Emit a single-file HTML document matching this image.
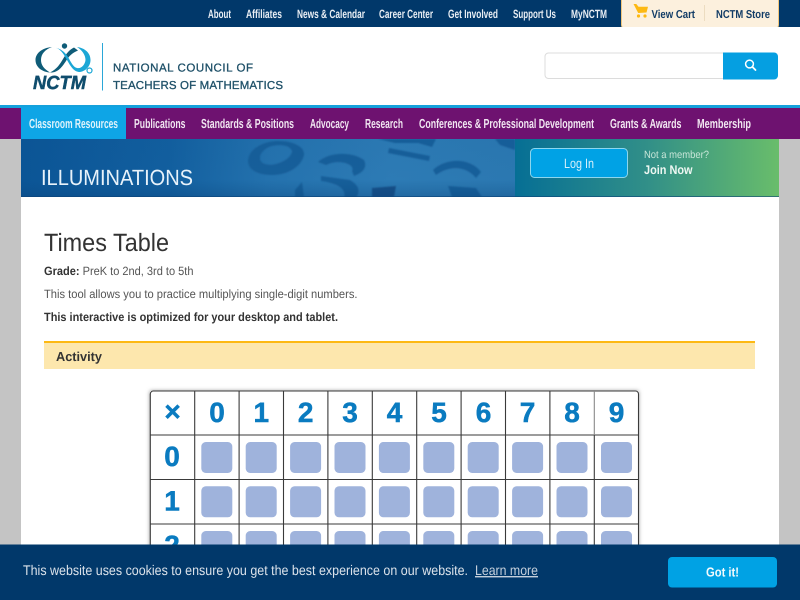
<!DOCTYPE html>
<html>
<head>
<meta charset="utf-8">
<title>Times Table</title>
<style>
html,body{margin:0;padding:0;width:800px;height:600px;overflow:hidden;background:#c4c4c4}
svg{display:block}
text{font-family:"Liberation Sans",Arial,sans-serif;text-rendering:geometricPrecision}
.t{font-weight:700;font-size:12px;fill:#e9eef4}
.n{font-weight:700;font-size:13px;fill:#f1e6f1}
.d{font-weight:700;font-size:28px;fill:#0a7bc0;stroke:#0a7bc0;stroke-width:.5px;text-anchor:middle}
</style>
</head>
<body>
<svg width="800" height="600" viewBox="0 0 800 600" xmlns="http://www.w3.org/2000/svg">
<defs>
<linearGradient id="bl" x1="0" x2="1" y1="0" y2="0">
<stop offset="0" stop-color="#0b5596"/><stop offset="0.3" stop-color="#125f9f"/><stop offset="0.5" stop-color="#2472ae"/><stop offset="0.75" stop-color="#2d7bb5"/><stop offset="1" stop-color="#2b78b1"/>
</linearGradient>
<linearGradient id="bd" x1="0" x2="0" y1="0" y2="1">
<stop offset="0" stop-color="#0a4a80" stop-opacity="0.05"/><stop offset="0.7" stop-color="#0a4a80" stop-opacity="0"/><stop offset="1" stop-color="#0a3f75" stop-opacity="0.3"/>
</linearGradient>
<linearGradient id="gr" x1="0" x2="1" y1="0" y2="0">
<stop offset="0" stop-color="#066f95"/><stop offset="0.5" stop-color="#318f88"/><stop offset="1" stop-color="#69bd6b"/>
</linearGradient>
<clipPath id="bc"><rect x="21" y="139" width="494" height="58"/></clipPath>
<filter id="b1"><feGaussianBlur stdDeviation="0.7"/></filter>
<filter id="sh" x="-5%" y="-5%" width="110%" height="110%"><feGaussianBlur stdDeviation="2"/></filter>
</defs>

<rect width="800" height="600" fill="#c4c4c4"/>
<!-- top bar -->
<rect width="800" height="27" fill="#01386a"/>
<text class="t" x="208" y="18" textLength="23" lengthAdjust="spacingAndGlyphs">About</text>
<text class="t" x="246" y="18" textLength="36" lengthAdjust="spacingAndGlyphs">Affiliates</text>
<text class="t" x="297" y="18" textLength="68" lengthAdjust="spacingAndGlyphs">News &amp; Calendar</text>
<text class="t" x="379" y="18" textLength="54" lengthAdjust="spacingAndGlyphs">Career Center</text>
<text class="t" x="448" y="18" textLength="50" lengthAdjust="spacingAndGlyphs">Get Involved</text>
<text class="t" x="513" y="18" textLength="43" lengthAdjust="spacingAndGlyphs">Support Us</text>
<text class="t" x="571" y="18" textLength="36" lengthAdjust="spacingAndGlyphs">MyNCTM</text>

<!-- cart -->
<rect x="621.500" y="-5" width="157" height="34" rx="4" fill="#fcf0dd" stroke="#f0c67c"/>
<path d="M633.500 4h2.800l2.200 2.800h9.500l-1.500 5.700-8.300.5z" fill="#fdb913"/>
<circle cx="638.500" cy="16" r="1.600" fill="#fdb913"/><circle cx="645" cy="16" r="1.600" fill="#fdb913"/>
<text x="651.500" y="18" font-size="11.500" font-weight="700" fill="#123c66" textLength="43.500" lengthAdjust="spacingAndGlyphs">View Cart</text>
<rect x="704" y="5" width="1" height="16" fill="#ecdcc0"/>
<text x="716" y="18" font-size="11.500" font-weight="700" fill="#123c66" textLength="54" lengthAdjust="spacingAndGlyphs">NCTM Store</text>

<!-- header -->
<rect y="27" width="800" height="78" fill="#fff"/>
<!-- logo -->
<path d="M52 47C41 48 35.500 54 35.500 60C35.500 67 42 72 50 72.500C44 69 41 65 41 60C41 54 45 49.500 52 47Z" fill="#0f5c78"/>
<path d="M50 72.500C58 73 62 67 66 61C69 56 72 53 78 50.500L74 47.500C69 50 66 54 63 59C60 64 57 69 50 72.500Z" fill="#0f5c78"/>
<path d="M54 47.500C60 48 63 53 67 60C71 67 74 72 80 72C86 71 90.500 66 90.500 60C90.500 53 85 48 77 47C82 50 85.500 55 85.500 60C85 65 81 69 77 68C73 67 71 62 68 57C65 52 60 48 54 47.500Z" fill="#1ba7d6"/>
<circle cx="64.500" cy="46" r="2.700" fill="#0f5c78"/>
<circle cx="89.500" cy="70.500" r="2.500" fill="#fff" stroke="#1ba7d6" stroke-width="1.200"/>
<text x="33" y="89" font-size="19" font-weight="700" font-style="italic" fill="#0f4d6d" stroke="#0f4d6d" stroke-width=".5" textLength="53" lengthAdjust="spacingAndGlyphs">NCTM</text>
<rect x="102" y="43" width="1" height="47.500" fill="#2aa7d8"/>
<text x="113" y="71.500" font-size="11.500" fill="#1e5068" stroke="#1e5068" stroke-width=".3" textLength="140" lengthAdjust="spacing">NATIONAL COUNCIL OF</text>
<text x="113" y="89" font-size="11.500" fill="#1e5068" stroke="#1e5068" stroke-width=".3" textLength="170" lengthAdjust="spacing">TEACHERS OF MATHEMATICS</text>

<!-- search -->
<rect x="545" y="53" width="232" height="25.500" rx="3.500" fill="#fff" stroke="#dcdcdc"/>
<path d="M723 52.500h51a4 4 0 0 1 4 4v19a4 4 0 0 1-4 4h-51z" fill="#059fe1"/>
<circle cx="749.500" cy="64" r="3.900" fill="none" stroke="#fff" stroke-width="1.500"/>
<path d="M752.500 67l3 3" stroke="#fff" stroke-width="1.800" stroke-linecap="round"/>

<!-- purple nav -->
<rect y="105" width="800" height="3" fill="#14a1dc"/>
<rect y="108" width="800" height="31" fill="#6e1270"/>
<rect x="21" y="107" width="105" height="32" fill="#0ea5e6"/>
<text class="n" x="29" y="128" textLength="89" lengthAdjust="spacingAndGlyphs" style="fill:#dff3fb">Classroom Resources</text>
<text class="n" x="134" y="128" textLength="51.500" lengthAdjust="spacingAndGlyphs">Publications</text>
<text class="n" x="201" y="128" textLength="93" lengthAdjust="spacingAndGlyphs">Standards &amp; Positions</text>
<text class="n" x="310" y="128" textLength="39" lengthAdjust="spacingAndGlyphs">Advocacy</text>
<text class="n" x="365" y="128" textLength="38" lengthAdjust="spacingAndGlyphs">Research</text>
<text class="n" x="419" y="128" textLength="175" lengthAdjust="spacingAndGlyphs">Conferences &amp; Professional Development</text>
<text class="n" x="610" y="128" textLength="71.500" lengthAdjust="spacingAndGlyphs">Grants &amp; Awards</text>
<text class="n" x="697" y="128" textLength="54" lengthAdjust="spacingAndGlyphs">Membership</text>

<!-- banner -->
<rect x="21" y="139" width="494" height="58" fill="url(#bl)"/>
<g clip-path="url(#bc)" filter="url(#b1)" fill="#175e9a">
<path fill-rule="evenodd" d="M248 161C248 150 262 141 278 141C294 141 305 147 304 155C302 165 290 175 272 175C258 175 248 170 248 161ZM260 158C260 164 268 166 276 164C287 161 292 155 292 151C290 145 280 144 272 146C265 148 260 153 260 158Z"/>
<path d="M318 162C328 152 352 151 364 160C368 168 362 173 354 176L352 171C356 165 340 158 326 165Z"/>
<path d="M321 176L350 180C360 186 360 192 356 198L344 198C347 188 336 183 321 181Z"/>
<path d="M372 188L396 186L394 197L372 197Z" fill="#124f88"/>
<path d="M389 148L430 156L429 161L388 153Z"/>
<path d="M378 139L436 139L432 147L418 143L395 143Z"/>
<path d="M433 170C445 158 470 157 481 172L476 178C466 166 450 165 436 175Z"/>
<path d="M448 186L476 188L482 197L452 197Z"/>
<path d="M495 139L515 139L515 150L500 145Z"/>
<path d="M295 190L302 182L304 197L295 197Z"/>
</g>
<rect x="21" y="139" width="494" height="58" fill="url(#bd)"/>
<rect x="515" y="139" width="264" height="58" fill="url(#gr)"/>
<rect x="21" y="196" width="758" height="1" fill="#0b4378" opacity="0.6"/>
<text x="41" y="185" font-size="22" fill="#e8f2fa" textLength="152" lengthAdjust="spacingAndGlyphs">ILLUMINATIONS</text>
<rect x="530.500" y="148.500" width="97" height="29" rx="4" fill="#00a2e5" stroke="#8cd6ee"/>
<text x="564" y="168" font-size="13.500" fill="#d6f0fb" textLength="30" lengthAdjust="spacingAndGlyphs">Log In</text>
<text x="644" y="158" font-size="10.500" fill="#c8e6d8" textLength="65" lengthAdjust="spacingAndGlyphs">Not a member?</text>
<text x="644" y="174" font-size="12.500" font-weight="700" fill="#eef7f2" textLength="48.500" lengthAdjust="spacingAndGlyphs">Join Now</text>

<!-- content -->
<rect x="21" y="197" width="758" height="403" fill="#fff"/>
<text x="44" y="251" font-size="25" fill="#333" textLength="125" lengthAdjust="spacingAndGlyphs">Times Table</text>
<text x="44" y="275" font-size="12" fill="#555" textLength="149.500" lengthAdjust="spacingAndGlyphs"><tspan font-weight="700" fill="#333">Grade:</tspan> PreK to 2nd, 3rd to 5th</text>
<text x="44" y="298" font-size="12" fill="#555" textLength="313.500" lengthAdjust="spacingAndGlyphs">This tool allows you to practice multiplying single-digit numbers.</text>
<text x="44" y="321" font-size="12" font-weight="700" fill="#333" textLength="294" lengthAdjust="spacingAndGlyphs">This interactive is optimized for your desktop and tablet.</text>
<rect x="44" y="341" width="711" height="28" fill="#fde7ad"/>
<rect x="44" y="341" width="711" height="2" fill="#fdb913"/>
<text x="56" y="361" font-size="13" font-weight="700" fill="#333" textLength="46" lengthAdjust="spacingAndGlyphs">Activity</text>

<!-- table -->
<rect x="150" y="391" width="488.500" height="170" fill="#888" filter="url(#sh)"/>
<rect x="150" y="391" width="488.500" height="170" fill="#fff"/>
<g fill="#9fb3dc">
<rect x="201.300" y="442" width="31" height="31" rx="4.500"/><rect x="245.700" y="442" width="31" height="31" rx="4.500"/><rect x="290.100" y="442" width="31" height="31" rx="4.500"/><rect x="334.500" y="442" width="31" height="31" rx="4.500"/><rect x="378.900" y="442" width="31" height="31" rx="4.500"/><rect x="423.300" y="442" width="31" height="31" rx="4.500"/><rect x="467.700" y="442" width="31" height="31" rx="4.500"/><rect x="512.100" y="442" width="31" height="31" rx="4.500"/><rect x="556.500" y="442" width="31" height="31" rx="4.500"/><rect x="601" y="442" width="31" height="31" rx="4.500"/>
<rect x="201.300" y="486.300" width="31" height="31" rx="4.500"/><rect x="245.700" y="486.300" width="31" height="31" rx="4.500"/><rect x="290.100" y="486.300" width="31" height="31" rx="4.500"/><rect x="334.500" y="486.300" width="31" height="31" rx="4.500"/><rect x="378.900" y="486.300" width="31" height="31" rx="4.500"/><rect x="423.300" y="486.300" width="31" height="31" rx="4.500"/><rect x="467.700" y="486.300" width="31" height="31" rx="4.500"/><rect x="512.100" y="486.300" width="31" height="31" rx="4.500"/><rect x="556.500" y="486.300" width="31" height="31" rx="4.500"/><rect x="601" y="486.300" width="31" height="31" rx="4.500"/>
<rect x="201.300" y="531" width="31" height="31" rx="4.500"/><rect x="245.700" y="531" width="31" height="31" rx="4.500"/><rect x="290.100" y="531" width="31" height="31" rx="4.500"/><rect x="334.500" y="531" width="31" height="31" rx="4.500"/><rect x="378.900" y="531" width="31" height="31" rx="4.500"/><rect x="423.300" y="531" width="31" height="31" rx="4.500"/><rect x="467.700" y="531" width="31" height="31" rx="4.500"/><rect x="512.100" y="531" width="31" height="31" rx="4.500"/><rect x="556.500" y="531" width="31" height="31" rx="4.500"/><rect x="601" y="531" width="31" height="31" rx="4.500"/>
</g>
<g stroke="#3a3a3a" stroke-width="1.100" fill="none">
<path d="M150.300 560V394a3 3 0 0 1 3-3H635.500a3 3 0 0 1 3 3V560"/>
<path d="M194.700 391V560M239.100 391V560M283.500 391V560M327.900 391V560M372.300 391V560M416.700 391V560M461.100 391V560M505.500 391V560M549.900 391V560"/>
<path d="M594.300 435V560"/>
<path d="M150 435H638.500M150 479.500H638.500M150 524H638.500"/>
</g>
<path d="M594.300 391V435" stroke="#888" stroke-width="1.100"/>
<text class="d" x="172.500" y="421">×</text>
<text class="d" x="217" y="422">0</text><text class="d" x="261.300" y="422">1</text><text class="d" x="305.700" y="422">2</text><text class="d" x="350" y="422">3</text><text class="d" x="394.500" y="422">4</text><text class="d" x="439" y="422">5</text><text class="d" x="483.500" y="422">6</text><text class="d" x="527.500" y="422">7</text><text class="d" x="572" y="422">8</text><text class="d" x="616.500" y="422">9</text>
<text class="d" x="172" y="466">0</text><text class="d" x="172" y="510.500">1</text><text class="d" x="172" y="555">2</text>

<!-- cookie bar -->
<rect y="544.500" width="800" height="55.500" fill="#01386a"/>
<text x="23" y="575" font-size="14" fill="#dbe2ea" textLength="445" lengthAdjust="spacingAndGlyphs">This website uses cookies to ensure you get the best experience on our website.</text>
<text x="475" y="575" font-size="14" fill="#c5d0dc" text-decoration="underline" textLength="63" lengthAdjust="spacingAndGlyphs">Learn more</text>
<rect x="668" y="557" width="109" height="30.500" rx="4" fill="#00a2e4"/>
<text x="706" y="576.500" font-size="13" font-weight="700" fill="#f2fafd" textLength="33" lengthAdjust="spacingAndGlyphs">Got it!</text>
</svg>
</body>
</html>
